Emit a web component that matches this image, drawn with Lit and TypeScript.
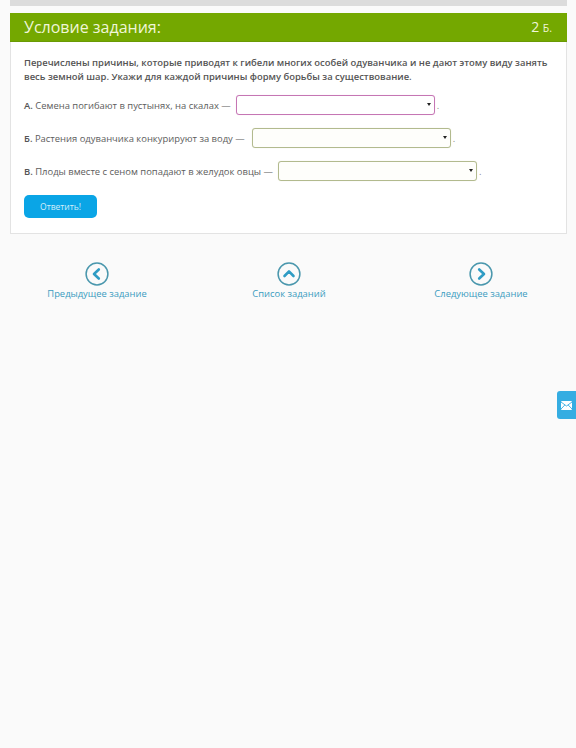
import { LitElement, html, css, svg } from "lit";
import { customElement } from "lit/decorators.js";

const icon = (chev: string) => html`<svg class="ico" viewBox="0 0 24 24" width="24" height="24" aria-hidden="true">
  <circle cx="12" cy="12" r="10.9" fill="none" stroke="#4a97ad" stroke-width="1.5"></circle>
  ${svg`<path d=${chev} fill="none" stroke="#2f9cc4" stroke-width="2.6" stroke-linecap="round" stroke-linejoin="round"></path>`}
</svg>`;

@customElement("app-root")
export class AppRoot extends LitElement {
  static styles = css`
    :host { display: block; min-height: 748px; background: #fafafa; font-family: "Open Sans", sans-serif; color: #555; position: relative; overflow: hidden; }
    .wrap { padding: 0 9px 0 10px; }
    .topbar { height: 6px; background: #dcdcdc; }
    .card { margin-top: 7px; background: #fff; border: 1px solid #e3e3e3; border-top: 0; }
    .head { height: 29px; box-sizing: border-box; margin: 0 -1px; background: #74a800; color: #f0f6d8; display: flex; align-items: center; justify-content: space-between; padding: 0 15px 0 14px; border-bottom: 1px solid #6a9a05; }
    .title { font-size: 16px; line-height: 28px; }
    .score { font-size: 14px; line-height: 28px; }
    .score small { font-size: 10.5px; }
    .body { padding: 14px 13px 15px; font-size: 9.43px; }
    .task { margin: 0 0 11px; font-weight: 600; line-height: 14px; color: #555; }
    .row { display: flex; align-items: center; height: 20px; margin-bottom: 13px; color: #5c5c5c; white-space: pre; }
    .row b { color: #555; font-weight: 600; }
    .sel { position: relative; display: block; margin: 0 2px 0 5px; }
    .sel::after { content: ""; position: absolute; right: 4px; top: 8px; border: 2px solid transparent; border-top: 3px solid #222; border-bottom: 0; pointer-events: none; }
    select { display: block; width: 199px; height: 20px; box-sizing: border-box; appearance: none; background: #fefefb; border: 1.5px solid #b2ba8e; border-radius: 3px; font: inherit; padding: 0; color: #333; box-shadow: 0 0 1px #dfe2c8; }
    select.pink { border-color: #c576b4; box-shadow: 0 0 1px #edc9e6; background: #fff; }
    .wide { margin-left: 7px; }
    .dot { color: #888; }
    .btn { display: block; margin-top: 14px; width: 73px; height: 23px; border: 0; border-radius: 5px; background: #0aa5e6; color: #d4eefa; font: inherit; font-size: 8.5px; padding: 0; }
    .nav { display: grid; grid-template-columns: repeat(3, 192px); margin: 28px 0 0 1px; }
    .nav a { display: flex; flex-direction: column; align-items: center; color: #3a9cc0; font-size: 9.4px; line-height: 16px; text-decoration: none; }
    .ico { display: block; }
    .fb { position: absolute; right: 0; top: 391px; width: 19px; height: 28px; background: #35ade2; border-radius: 3px 0 0 3px; display: flex; align-items: center; justify-content: center; }
  `;

  render() {
    return html`
      <div class="wrap">
        <div class="topbar"></div>
        <section class="card">
          <header class="head">
            <span class="title">Условие задания:</span>
            <span class="score">2 <small>Б.</small></span>
          </header>
          <div class="body">
            <p class="task">Перечислены причины, которые приводят к гибели многих особей одуванчика и не дают этому виду занять весь земной шар. Укажи для каждой причины форму борьбы за существование.</p>
            <div class="row"><b>А.</b> Семена погибают в пустынях, на скалах —<span class="sel"><select class="pink" aria-label="А"><option></option></select></span><span class="dot">.</span></div>
            <div class="row"><b>Б.</b> Растения одуванчика конкурируют за воду —<span class="sel wide"><select aria-label="Б"><option></option></select></span><span class="dot">.</span></div>
            <div class="row"><b>В.</b> Плоды вместе с сеном попадают в желудок овцы —<span class="sel"><select aria-label="В"><option></option></select></span><span class="dot">.</span></div>
            <button class="btn">Ответить!</button>
          </div>
        </section>
      </div>
      <nav class="nav">
        <a href="#">${icon("M13.8 7.5 9 12l4.8 4.5")}Предыдущее задание</a>
        <a href="#">${icon("M7.5 14 12 9.4l4.5 4.6")}Список заданий</a>
        <a href="#">${icon("M10.2 7.5 15 12l-4.8 4.5")}Следующее задание</a>
      </nav>
      <div class="fb">
        <svg width="11" height="9" viewBox="0 0 11 9" aria-hidden="true"><rect width="11" height="9" rx="1" fill="#fff"></rect><path d="M0 1l5.5 4L11 1M0 8l3.8-4M11 8 7.2 4" fill="none" stroke="#35ade2" stroke-width="0.9"></path></svg>
      </div>
    `;
  }
}
